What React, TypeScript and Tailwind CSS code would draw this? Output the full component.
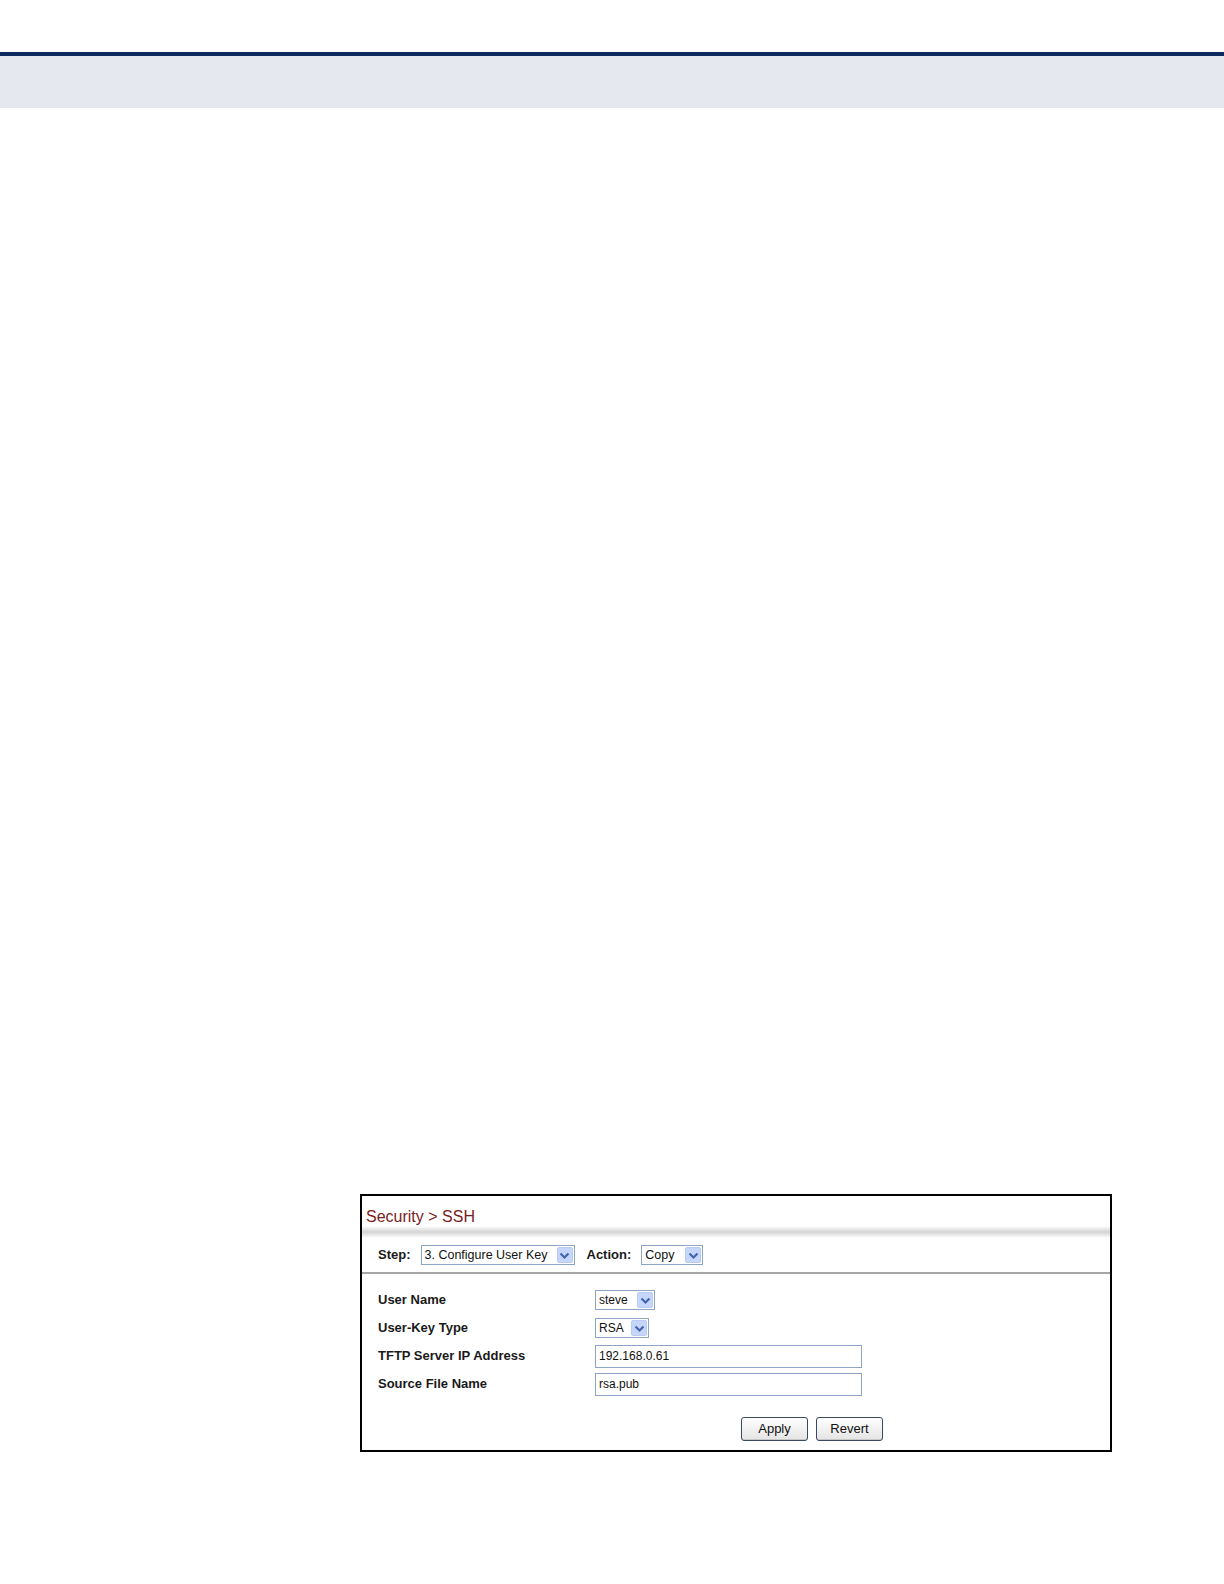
import React from "react";

const font = { fontFamily: '"Liberation Sans", Arial, sans-serif' };

function Arrow() {
  return (
    <span className="flex h-[16px] w-[16px] items-center justify-center rounded-[2px] border border-[#b9cbf2] bg-[#c6d6fa]">
      <svg width="11" height="9" viewBox="0 0 11 9">
        <path d="M1.5 2.5 L5.5 6.5 L9.5 2.5" fill="none" stroke="#4565ad" strokeWidth="2.2" />
      </svg>
    </span>
  );
}

function Select({ value, width, size = "text-[12px]" }: { value: string; width: string; size?: string }) {
  return (
    <div className={`flex h-[20px] items-center justify-between border border-[#8ea4c6] bg-white pl-[3px] pr-[1px] text-[#111] ${size} ${width}`}>
      <span className="whitespace-nowrap">{value}</span>
      <Arrow />
    </div>
  );
}

function Input({ value }: { value: string }) {
  return (
    <div className="flex h-[23px] w-[267px] items-center border border-[#8ea4c6] bg-white pl-[3px] text-[12px] text-[#111]">
      {value}
    </div>
  );
}

function Row({ label, children }: { label: string; children: React.ReactNode }) {
  return (
    <div className="flex h-[28px] items-center">
      <div className="w-[233px] pl-[16px] text-[13px] font-bold text-[#1a1a1a]">{label}</div>
      {children}
    </div>
  );
}

function Button({ label }: { label: string }) {
  return (
    <div className="flex h-[24px] w-[67px] items-center justify-center rounded-[3px] border border-[#3a4a60] bg-gradient-to-b from-white to-[#e4e4e4] text-[13px] text-[#111] shadow-[inset_0_-1px_0_#c8c8c8]">
      {label}
    </div>
  );
}

export default function App() {
  return (
    <div className="relative h-[1584px] w-[1224px] bg-white" style={font}>
      <div className="h-[52px]" />
      <div className="h-[4px] bg-[#0c2a5e]" />
      <div className="h-[52px] bg-[#e5e8ef]" />
      <div className="ml-[360px] mt-[1086px] flex h-[258px] w-[752px] flex-col border-2 border-black">
        <div className="h-[30px] pl-[4px] pt-[11px] text-[16px] leading-[20px] text-[#7a1c1c]">
          Security &gt; SSH
        </div>
        <div className="h-[12px] bg-gradient-to-b from-white via-[#d4d4d4] to-white" />
        <div className="flex h-[34px] items-center pl-[16px] text-[13px]">
          <span className="mr-[10px] font-bold text-[#1a1a1a]">Step:</span>
          <Select value="3. Configure User Key" width="w-[154px]" size="text-[12.5px]" />
          <span className="ml-[12px] mr-[10px] font-bold text-[#1a1a1a]">Action:</span>
          <Select value="Copy" width="w-[62px]" size="text-[12.5px]" />
        </div>
        <div className="h-[2px] bg-[#a6a6a6]" />
        <div className="h-[12px]" />
        <Row label="User Name">
          <Select value="steve" width="w-[60px]" />
        </Row>
        <Row label="User-Key Type">
          <Select value="RSA" width="w-[54px]" />
        </Row>
        <Row label="TFTP Server IP Address">
          <Input value="192.168.0.61" />
        </Row>
        <Row label="Source File Name">
          <Input value="rsa.pub" />
        </Row>
        <div className="flex gap-[8px] pl-[379px] pt-[19px]">
          <Button label="Apply" />
          <Button label="Revert" />
        </div>
      </div>
    </div>
  );
}
